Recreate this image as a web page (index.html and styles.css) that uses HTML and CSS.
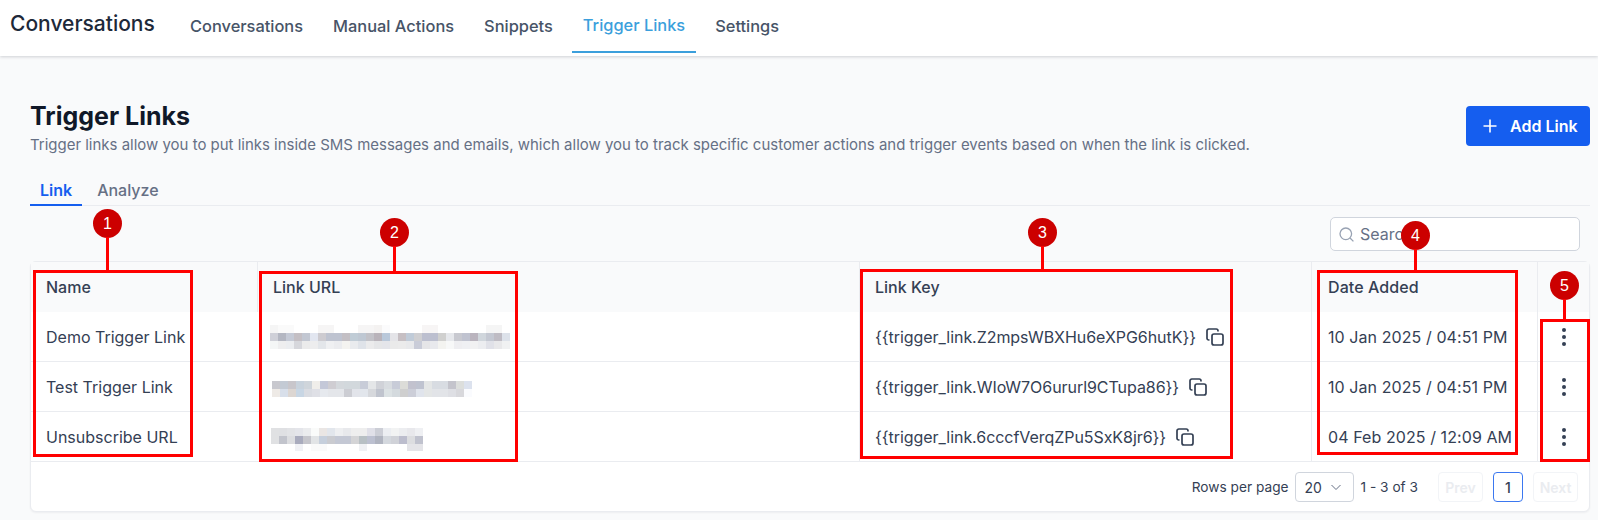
FILE: index.html
```html
<!DOCTYPE html>
<html lang="en">
<head>
  <meta charset="UTF-8">
  <title>Trigger Links</title>
  <link rel="stylesheet" href="styles.css">
</head>
<body>
  <header class="topbar">
    <div class="brand">Conversations</div>
    <nav class="topnav">
      <a class="topnav-item">Conversations</a>
      <a class="topnav-item">Manual Actions</a>
      <a class="topnav-item">Snippets</a>
      <a class="topnav-item active">Trigger Links</a>
      <a class="topnav-item">Settings</a>
    </nav>
  </header>

  <main class="content">
    <div class="page-head">
      <div>
        <h1>Trigger Links</h1>
        <p class="sub">Trigger links allow you to put links inside SMS messages and emails, which allow you to track specific customer actions and trigger events based on when the link is clicked.</p>
      </div>
      <button class="add-btn">
        <svg width="14" height="14" viewBox="0 0 14 14" fill="none" stroke="#fff" stroke-width="1.6"><path d="M7 0.500v13M0.500 7h13"/></svg>
        Add Link
      </button>
    </div>

    <div class="tabs">
      <a class="tab active">Link</a>
      <a class="tab">Analyze</a>
    </div>

    <div class="search-row">
      <div class="search">
        <svg width="15" height="15" viewBox="0 0 15 15" fill="none" stroke="#98a2b3" stroke-width="1.3"><circle cx="6.800" cy="6.800" r="5.800"/><path d="M11 11l3.400 3.400"/></svg>
        <span>Search</span>
      </div>
    </div>

    <div class="card">
      <div class="row head">
        <div class="cell">Name</div>
        <div class="cell">Link URL</div>
        <div class="cell">Link Key</div>
        <div class="cell date">Date Added</div>
        <div class="cell"></div>
      </div>
      <div class="row">
        <div class="cell">Demo Trigger Link</div>
        <div class="cell">
          <!-- pixelated address -->
          <svg class="blur blur-1" width="240" height="25" shape-rendering="crispEdges">
            <rect x="0" y="1" fill="#f5f5f5"/><rect x="8" y="1" fill="#fafafa"/><rect x="16" y="1" fill="#fafafa"/><rect x="48" y="1" fill="#f6f5f5"/><rect x="56" y="1" fill="#f6f5f5"/><rect x="88" y="1" fill="#f6f5f5"/><rect x="96" y="1" fill="#f6f5f5"/><rect x="104" y="1" fill="#f4f2f1"/><rect x="112" y="1" fill="#fbfbfc"/><rect x="152" y="1" fill="#f7f5f5"/><rect x="160" y="1" fill="#f7f5f5"/><rect x="216" y="1" fill="#f5f5f5"/><rect x="224" y="1" fill="#f5f5f5"/>
            <rect x="0" y="9" fill="#cfd0d8"/><rect x="8" y="9" fill="#b4b7c2"/><rect x="16" y="9" fill="#c5cad6"/><rect x="24" y="9" fill="#c4bfc4"/><rect x="32" y="9" fill="#c2c7d2"/><rect x="40" y="9" fill="#e2e6f0"/><rect x="48" y="9" fill="#cdcbd0"/><rect x="56" y="9" fill="#bec3d0"/><rect x="64" y="9" fill="#bec3d0"/><rect x="72" y="9" fill="#c3bfc4"/><rect x="80" y="9" fill="#c0ccd6"/><rect x="88" y="9" fill="#bfc8d3"/><rect x="96" y="9" fill="#c2c2c8"/><rect x="104" y="9" fill="#b9b3ba"/><rect x="112" y="9" fill="#b9c8da"/><rect x="120" y="9" fill="#e4e4e8"/><rect x="128" y="9" fill="#c6bfc3"/><rect x="136" y="9" fill="#c0cbd8"/><rect x="144" y="9" fill="#cfcfd2"/><rect x="152" y="9" fill="#bcbfcf"/><rect x="160" y="9" fill="#bcbfcf"/><rect x="168" y="9" fill="#d0d0cf"/><rect x="176" y="9" fill="#e6e8ec"/><rect x="184" y="9" fill="#c8c9d0"/><rect x="192" y="9" fill="#c0c3d0"/><rect x="200" y="9" fill="#bab4be"/><rect x="208" y="9" fill="#d0d6dc"/><rect x="216" y="9" fill="#c4c8d2"/><rect x="224" y="9" fill="#bfbcc4"/><rect x="232" y="9" fill="#dde2ea"/>
            <rect x="0" y="17" fill="#f4f6f6"/><rect x="8" y="17" fill="#eeeeef"/><rect x="16" y="17" fill="#ebedf0"/><rect x="24" y="17" fill="#d6d7dc"/><rect x="32" y="17" fill="#ebebeb"/><rect x="40" y="17" fill="#ededee"/><rect x="48" y="17" fill="#e3e6ea"/><rect x="56" y="17" fill="#eff0f2"/><rect x="64" y="17" fill="#ebecef"/><rect x="72" y="17" fill="#f4f3f0"/><rect x="80" y="17" fill="#e9ebee"/><rect x="88" y="17" fill="#dfe3e9"/><rect x="96" y="17" fill="#ebebec"/><rect x="104" y="17" fill="#e5e6e8"/><rect x="112" y="17" fill="#e4e5ea"/><rect x="120" y="17" fill="#eaeaea"/><rect x="128" y="17" fill="#ebebeb"/><rect x="136" y="17" fill="#e8e9eb"/><rect x="144" y="17" fill="#c9ccd8"/><rect x="152" y="17" fill="#e5e5e7"/><rect x="160" y="17" fill="#e8e9ed"/><rect x="168" y="17" fill="#f3f3f0"/><rect x="176" y="17" fill="#f7f8f8"/><rect x="184" y="17" fill="#eeeef1"/><rect x="192" y="17" fill="#eff0f3"/><rect x="200" y="17" fill="#f1f1f2"/><rect x="208" y="17" fill="#ecedf0"/><rect x="216" y="17" fill="#e0e1e8"/><rect x="224" y="17" fill="#e8e8ea"/><rect x="232" y="17" fill="#f0f1f2"/>
          </svg>
        </div>
        <div class="cell key">{{trigger_link.Z2mpsWBXHu6eXPG6hutK}}
          <svg class="copy" width="18" height="18" viewBox="0 0 18 18" fill="none" stroke="#344054" stroke-width="1.700"><path d="M3.500 12H2.800A1.800 1.800 0 0 1 1 10.200V2.800A1.800 1.800 0 0 1 2.800 1H10.200A1.800 1.800 0 0 1 12 2.800V3.500"/><rect x="6" y="6" width="11" height="11" rx="2"/></svg>
        </div>
        <div class="cell date">10 Jan 2025 / 04:51 PM</div>
        <div class="cell dots"><i></i><i></i><i></i></div>
      </div>
      <div class="row">
        <div class="cell">Test Trigger Link</div>
        <div class="cell">
          <svg class="blur blur-2" width="200" height="25" shape-rendering="crispEdges">
            <rect x="0" y="7" fill="#c8c8ce"/><rect x="8" y="7" fill="#c3cad4"/><rect x="16" y="7" fill="#c8c6cb"/><rect x="24" y="7" fill="#c8d2dc"/><rect x="32" y="7" fill="#cfd5db"/><rect x="40" y="7" fill="#f0eeea"/><rect x="48" y="7" fill="#c4c8d8"/><rect x="56" y="7" fill="#cfcdd2"/><rect x="64" y="7" fill="#d4d8dc"/><rect x="72" y="7" fill="#d2d8dc"/><rect x="80" y="7" fill="#d2d8dc"/><rect x="88" y="7" fill="#c8ccd8"/><rect x="96" y="7" fill="#e4e6e8"/><rect x="104" y="7" fill="#d0d2d8"/><rect x="112" y="7" fill="#d8dce0"/><rect x="120" y="7" fill="#c8ccd8"/><rect x="128" y="7" fill="#dcdcd8"/><rect x="136" y="7" fill="#c2c2ce"/><rect x="144" y="7" fill="#bfc3d0"/><rect x="152" y="7" fill="#e4e6e6"/><rect x="160" y="7" fill="#d8dce2"/><rect x="168" y="7" fill="#d8dce2"/><rect x="176" y="7" fill="#c4c4cc"/><rect x="184" y="7" fill="#dcdedc"/><rect x="192" y="7" fill="#dce2ee"/>
            <rect x="0" y="15" fill="#eeeae6"/><rect x="8" y="15" fill="#d8dfea"/><rect x="16" y="15" fill="#dcd6d2"/><rect x="24" y="15" fill="#c8d6e4"/><rect x="32" y="15" fill="#dadce2"/><rect x="40" y="15" fill="#dfe0e6"/><rect x="48" y="15" fill="#e6e9ee"/><rect x="56" y="15" fill="#e4e6ea"/><rect x="64" y="15" fill="#e4e6ea"/><rect x="72" y="15" fill="#cccdd3"/><rect x="80" y="15" fill="#e2e4ea"/><rect x="88" y="15" fill="#e2e6ec"/><rect x="96" y="15" fill="#d6d8dc"/><rect x="104" y="15" fill="#c0c4ce"/><rect x="112" y="15" fill="#dce2e4"/><rect x="120" y="15" fill="#d4dade"/><rect x="128" y="15" fill="#cfcfcf"/><rect x="136" y="15" fill="#ccced8"/><rect x="144" y="15" fill="#e0e4ec"/><rect x="152" y="15" fill="#e4e6e6"/><rect x="160" y="15" fill="#e2e4e8"/><rect x="168" y="15" fill="#e2e4e8"/><rect x="176" y="15" fill="#dedfe4"/><rect x="184" y="15" fill="#d8d8dc"/><rect x="192" y="15" fill="#fafbfe"/>
          </svg>
        </div>
        <div class="cell key">{{trigger_link.WIoW7O6ururl9CTupa86}}
          <svg class="copy" width="18" height="18" viewBox="0 0 18 18" fill="none" stroke="#344054" stroke-width="1.700"><path d="M3.500 12H2.800A1.800 1.800 0 0 1 1 10.200V2.800A1.800 1.800 0 0 1 2.800 1H10.200A1.800 1.800 0 0 1 12 2.800V3.500"/><rect x="6" y="6" width="11" height="11" rx="2"/></svg>
        </div>
        <div class="cell date">10 Jan 2025 / 04:51 PM</div>
        <div class="cell dots"><i></i><i></i><i></i></div>
      </div>
      <div class="row">
        <div class="cell">Unsubscribe URL</div>
        <div class="cell">
          <svg class="blur blur-3" width="152" height="29" shape-rendering="crispEdges">
            <rect x="0" y="6" fill="#e0e1e3"/><rect x="8" y="6" fill="#dfe0e3"/><rect x="16" y="6" fill="#e2e3e6"/><rect x="24" y="6" fill="#e4e5ea"/><rect x="32" y="6" fill="#ebecee"/><rect x="40" y="6" fill="#fafbfa"/><rect x="48" y="6" fill="#eae6e4"/><rect x="56" y="6" fill="#e2e6ec"/><rect x="64" y="6" fill="#eeeff1"/><rect x="72" y="6" fill="#e8e9ec"/><rect x="80" y="6" fill="#eeeeee"/><rect x="88" y="6" fill="#eeeeee"/><rect x="96" y="6" fill="#e0e0e8"/><rect x="104" y="6" fill="#ccced6"/><rect x="112" y="6" fill="#eceef2"/><rect x="120" y="6" fill="#f2f3f3"/><rect x="128" y="6" fill="#ecedf0"/><rect x="136" y="6" fill="#e8e8ec"/><rect x="144" y="6" fill="#eff0f3"/>
            <rect x="0" y="14" fill="#e0e1e3"/><rect x="8" y="14" fill="#c2c4cc"/><rect x="16" y="14" fill="#dcdde0"/><rect x="24" y="14" fill="#a9abbd"/><rect x="32" y="14" fill="#c6c6cc"/><rect x="40" y="14" fill="#e2e4e6"/><rect x="48" y="14" fill="#c6cfdc"/><rect x="56" y="14" fill="#cacbd0"/><rect x="64" y="14" fill="#c4c8d4"/><rect x="72" y="14" fill="#c4c8d4"/><rect x="80" y="14" fill="#d4d4d6"/><rect x="88" y="14" fill="#b8c0c4"/><rect x="96" y="14" fill="#bcc0d0"/><rect x="104" y="14" fill="#b0b4c0"/><rect x="112" y="14" fill="#d4d8de"/><rect x="120" y="14" fill="#d0d2d8"/><rect x="128" y="14" fill="#bcbdcd"/><rect x="136" y="14" fill="#dcdde0"/><rect x="144" y="14" fill="#c0c2ce"/>
            <rect x="24" y="22" fill="#f0f1f5"/><rect x="40" y="22" fill="#fafafa"/><rect x="48" y="22" fill="#fafafa"/><rect x="88" y="22" fill="#f0f1f4"/><rect x="136" y="22" fill="#e4e4e8"/><rect x="144" y="22" fill="#e4e4e8"/>
          </svg>
        </div>
        <div class="cell key">{{trigger_link.6cccfVerqZPu5SxK8jr6}}
          <svg class="copy" width="18" height="18" viewBox="0 0 18 18" fill="none" stroke="#344054" stroke-width="1.700"><path d="M3.500 12H2.800A1.800 1.800 0 0 1 1 10.200V2.800A1.800 1.800 0 0 1 2.800 1H10.200A1.800 1.800 0 0 1 12 2.800V3.500"/><rect x="6" y="6" width="11" height="11" rx="2"/></svg>
        </div>
        <div class="cell date">04 Feb 2025 / 12:09 AM</div>
        <div class="cell dots"><i></i><i></i><i></i></div>
      </div>
      <div class="pager">
        <span>Rows per page</span>
        <div class="select">20
          <svg width="12" height="12" viewBox="0 0 12 12" fill="none" stroke="#667085" stroke-width="1"><path d="M1.500 4l4.500 4.500L10.500 4"/></svg>
        </div>
        <span>1 - 3 of 3</span>
        <button class="page-btn prev">Prev</button>
        <button class="page-btn current">1</button>
        <button class="page-btn">Next</button>
      </div>
    </div>
  </main>

  <!-- annotations drawn on top of the screenshot -->
  <div class="box box-1"></div>
  <div class="box box-2"></div>
  <div class="box box-3"></div>
  <div class="box box-4"></div>
  <div class="box box-5"></div>
  <div class="pin pin-1">1</div>
  <div class="pin pin-2">2</div>
  <div class="pin pin-3">3</div>
  <div class="pin pin-4">4</div>
  <div class="pin pin-5">5</div>
</body>
</html>
```
FILE: styles.css
```css
* {
  margin: 0;
  padding: 0;
  box-sizing: border-box;
}
body {
  background: #f9fafb;
  font-family: Inter, "Liberation Sans", sans-serif;
  color: #344054;
  height: 520px;
  overflow: hidden;
}

.topbar {
  height: 56px;
  background: #fff;
  box-shadow: 0 1px 3px rgba(16, 24, 40, 0.18);
  display: flex;
  padding-left: 10px;
}
.brand {
  font-size: 21px;
  font-weight: 500;
  color: #1d2939;
  line-height: 47px;
  width: 165px;
}
.topnav {
  display: flex;
}
.topnav-item {
  font-size: 16.400px;
  font-weight: 500;
  color: #475467;
  line-height: 52px;
  padding: 0 15px;
  height: 53px;
}
.topnav-item.active {
  color: #3b9fdc;
  border-bottom: 2px solid #3b9fdc;
  padding: 0 11px;
  margin: 0 4px;
  line-height: 50px;
}

.content {
  padding: 50px 8px 0 30px;
}
.page-head {
  display: flex;
  justify-content: space-between;
  align-items: flex-start;
  height: 71px;
}
h1 {
  font-size: 25px;
  font-weight: 700;
  color: #101828;
  line-height: 30px;
  margin-top: -5px;
}
.sub {
  font-size: 14.970px;
  color: #667085;
  line-height: 20px;
  margin-top: 4px;
}
.add-btn {
  width: 124px;
  height: 40px;
  background: #155eef;
  border: none;
  border-radius: 4px;
  color: #fff;
  font-family: inherit;
  font-size: 16px;
  font-weight: 600;
  display: flex;
  align-items: center;
  gap: 13px;
  padding-left: 17px;
}

.tabs {
  display: flex;
  height: 35px;
  border-bottom: 1px solid #eaecf0;
  margin-top: -6px;
}
.tab {
  font-size: 16px;
  font-weight: 500;
  color: #667085;
  padding: 0 10px;
  line-height: 38px;
  height: 35px;
}
.tab.active {
  color: #155eef;
  font-weight: 600;
  border-bottom: 2px solid #155eef;
  margin-right: 5px;
}

.search-row {
  display: flex;
  justify-content: flex-end;
  padding: 11px 10px 10px 0;
}
.search {
  width: 250px;
  height: 34px;
  background: #fff;
  border: 1px solid #d0d5dd;
  border-radius: 5px;
  display: flex;
  align-items: center;
  gap: 6px;
  padding-left: 8px;
  font-size: 16px;
  color: #667085;
}

.card {
  background: #fff;
  border: 1px solid #eaecf0;
  border-radius: 6px;
  box-shadow: 0 1px 2px rgba(16, 24, 40, 0.05);
  height: 251px;
}
.row {
  display: grid;
  grid-template-columns: 227px 602px 452px 226px 1fr;
  height: 50px;
  border-bottom: 1px solid #eaecf0;
  font-size: 16px;
}
.row.head {
  background: #f9fafb;
  border-bottom: none;
  font-weight: 500;
  color: #344054;
}
.cell {
  display: flex;
  align-items: center;
  padding-left: 15px;
  border-right: 1px solid #eaecf0;
  white-space: nowrap;
}
.row.head .cell {
  padding-bottom: 1px;
}
.cell:last-child {
  border-right: none;
}
.row:not(.head) .cell:first-child {
  border-right: none;
}
.key {
  gap: 10px;
  letter-spacing: -0.05px;
}
.date {
  padding-left: 16px;
  letter-spacing: 0.08px;
}
.dots {
  flex-direction: column;
  justify-content: center;
  gap: 3px;
  padding: 0;
}
.dots i {
  width: 4px;
  height: 4px;
  border-radius: 50%;
  background: #344054;
}

/* pixelated url, the address is hidden in the screenshot */
.blur {
  flex: none;
}
.blur rect {
  width: 8px;
  height: 8px;
}
.blur-1 { margin-left: -3px; }
.blur-2 { margin-left: -1px; }
.blur-3 { margin-left: -2px; }

.pager {
  display: flex;
  align-items: center;
  justify-content: flex-end;
  height: 50px;
  padding-right: 11px;
  font-size: 13.700px;
  color: #344054;
}
.select {
  width: 59px;
  height: 30px;
  margin: 0 7px 0 6px;
  border: 1px solid #d0d5dd;
  border-radius: 4px;
  display: flex;
  align-items: center;
  gap: 8px;
  padding-left: 9px;
  font-size: 14px;
}
.page-btn {
  height: 30px;
  width: 45px;
  background: #fff;
  border: 1px solid #f2f4f7;
  border-radius: 4px;
  font-family: inherit;
  font-size: 14px;
  font-weight: 600;
  color: #eaecf0;
}
.page-btn.prev { margin-left: 20px; }
.page-btn.current {
  width: 30px;
  margin: 0 10px;
  border-color: #3b78f0;
  color: #344054;
  font-weight: 500;
}

/* annotations */
.box {
  position: absolute;
  border: 3px solid #f00;
}
.box-1 { left: 33px; top: 270px; width: 160px; height: 187px; }
.box-2 { left: 259px; top: 271px; width: 259px; height: 191px; }
.box-3 { left: 860px; top: 269px; width: 373px; height: 190px; }
.box-4 { left: 1317px; top: 270px; width: 201px; height: 185px; }
.box-5 { left: 1540px; top: 319px; width: 50px; height: 143px; }
.pin {
  position: absolute;
  width: 29px;
  height: 29px;
  border-radius: 50%;
  background: #c00;
  color: #fff;
  font-family: "Liberation Sans", sans-serif;
  font-size: 16px;
  line-height: 29px;
  text-align: center;
}
.pin::after {
  content: "";
  position: absolute;
  left: 13px;
  top: 28px;
  width: 3px;
  background: #f00;
}
.pin-1 { left: 93px; top: 209px; }
.pin-1::after { height: 34px; }
.pin-2 { left: 380px; top: 218px; }
.pin-2::after { height: 26px; }
.pin-3 { left: 1028px; top: 218px; }
.pin-3::after { height: 24px; }
.pin-4 { left: 1401px; top: 221px; }
.pin-4::after { height: 21px; }
.pin-5 { left: 1550px; top: 271px; }
.pin-5::after { height: 21px; }
```
